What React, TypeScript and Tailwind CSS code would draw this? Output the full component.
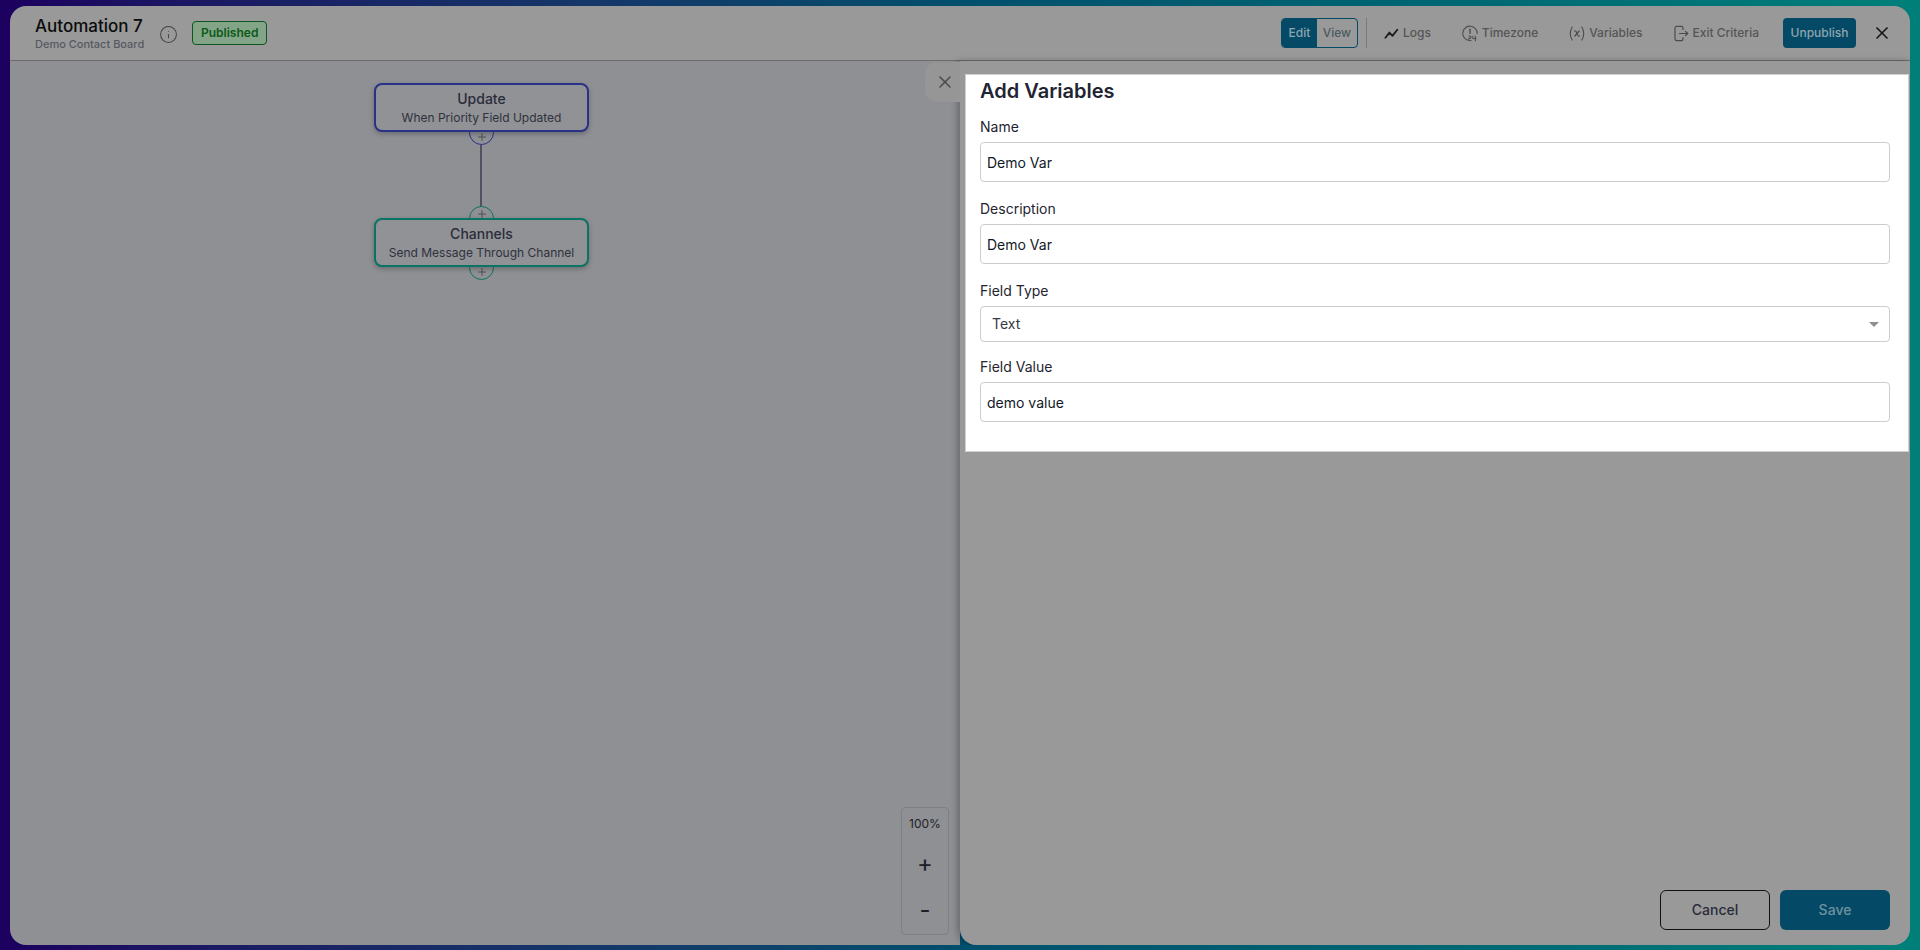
import { Info, Plus, X } from 'lucide-react';

function LogsIcon() {
  return (
    <svg width="15" height="15" viewBox="0 0 16 16" fill="none" stroke="#1f1f1f" strokeWidth="2" strokeLinejoin="round" strokeLinecap="round">
      <path d="M1.5 12.5 L5.8 7 L9 10.5 L14.2 4" />
    </svg>
  );
}

function TimezoneIcon() {
  return (
    <svg width="16" height="17" viewBox="0 0 16 17" fill="none" stroke="#4c4c4c" strokeWidth="1.1" strokeLinecap="round">
      <path d="M5.8 15.2 A7.2 7.2 0 1 1 15.2 8.5" />
      <path d="M8 4.2 V8.2" strokeWidth="1.4" />
      <path d="M6.8 11.2 H9 V13.2 H6.8 V15.6 H9" strokeWidth="1" />
      <path d="M10.8 11.2 V13.6 H14 M13.4 11.2 V15.8" strokeWidth="1" />
    </svg>
  );
}

function VariableIcon() {
  return (
    <svg width="16" height="17" viewBox="0 0 16 17" fill="none" stroke="#4c4c4c" strokeWidth="1.1" strokeLinecap="round">
      <path d="M3.2 2 C0.8 6 0.8 11 3.2 15" />
      <path d="M12.8 2 C15.2 6 15.2 11 12.8 15" />
      <path d="M5.4 6 C7.2 5.6 7.4 6.4 7.9 8.5 C8.4 10.6 8.7 11.4 10.6 11" strokeWidth="1.2" />
      <path d="M10.2 6 L5.8 11" strokeWidth="1.2" />
    </svg>
  );
}

function ExitIcon() {
  return (
    <svg width="15" height="17" viewBox="0 0 15 17" fill="none" stroke="#4c4c4c" strokeWidth="1.2" strokeLinecap="round" strokeLinejoin="round">
      <path d="M9 4.5 V3 A1.6 1.6 0 0 0 7.4 1.4 H2.6 A1.6 1.6 0 0 0 1 3 V14 A1.6 1.6 0 0 0 2.6 15.6 H7.4 A1.6 1.6 0 0 0 9 14 V12.5" />
      <path d="M5.5 8.5 H13.5 M11.5 6.5 L13.8 8.5 L11.5 10.5" />
    </svg>
  );
}

function NavItem({ icon, label }: { icon: React.ReactNode; label: string }) {
  return (
    <div className="flex items-center gap-[4px] text-xs font-medium text-[#555555]">
      {icon}
      <span>{label}</span>
    </div>
  );
}

function Header() {
  return (
    <header className="flex h-[55px] shrink-0 items-center justify-between border-b border-[#6c6c6c] bg-[#999999] pl-[25px] pr-[18px]">
      <div className="flex items-center">
        <div>
          <p className="text-[17px] leading-[22px] font-medium text-[#0b0b0b]">Automation 7</p>
          <p className="text-[11px] leading-[14px] font-medium text-[#555a62]">Demo Contact Board</p>
        </div>
        <Info className="ml-[15px] mt-[2px] text-[#444444]" size={19} strokeWidth={1.3} />
        <span className="ml-[14px] flex h-[24px] w-[75px] items-center justify-center rounded-[4px] border border-[#0d5621] bg-[#84a488] text-xs font-semibold text-[#0b5a18]">
          Published
        </span>
      </div>
      <div className="flex items-center">
        <div className="flex h-[30px] w-[77px] overflow-hidden rounded-[4px] border border-[#044a66] text-xs font-medium">
          <span className="flex w-[35px] items-center justify-center bg-[#044a66] text-[#8fa5b0]">Edit</span>
          <span className="flex flex-1 items-center justify-center text-[#4c5a60]">View</span>
        </div>
        <div className="ml-[8px] h-[30px] w-px bg-[#7a7a7a]" />
        <div className="ml-[17px] flex items-center gap-[31px]">
          <NavItem icon={<LogsIcon />} label="Logs" />
          <NavItem icon={<TimezoneIcon />} label="Timezone" />
          <NavItem icon={<VariableIcon />} label="Variables" />
          <NavItem icon={<ExitIcon />} label="Exit Criteria" />
        </div>
        <button className="ml-[24px] h-[30px] w-[73px] rounded-[4px] bg-[#044a66] text-xs font-medium text-[#8fa5b0]" type="button">
          Unpublish
        </button>
        <X className="ml-[16px] text-[#151515]" size={20} strokeWidth={2} />
      </div>
    </header>
  );
}

function Handle({ color, top, plus }: { color: string; top: string; plus: string }) {
  return (
    <div className={`absolute left-[459px] flex size-[25px] items-center justify-center rounded-full border bg-[#8f9094] ${color} ${top}`}>
      <Plus className={`text-[#4a4b52] ${plus}`} size={12} strokeWidth={1.8} />
    </div>
  );
}

function FlowNode({ title, subtitle, color, top }: { title: string; subtitle: string; color: string; top: string }) {
  return (
    <div className={`absolute left-[364px] flex h-[49px] w-[215px] flex-col items-center justify-center rounded-[8px] border-2 bg-[#919296] shadow-[0_2px_5px_rgba(0,0,0,0.25)] ${color} ${top}`}>
      <p className="text-sm leading-[19px] font-medium text-[#2a2c3a]">{title}</p>
      <p className="text-xs leading-[19px] text-[#2f313d]">{subtitle}</p>
    </div>
  );
}

function Canvas() {
  return (
    <div className="relative flex-1 bg-[#8f9094]">
      <div className="absolute left-[470px] top-[84px] h-[63px] w-[2px] bg-[#50525f]" />
      <Handle color="border-[#2a3288]" plus="translate-y-[4px]" top="top-[59px]" />
      <Handle color="border-[#0b7363]" plus="-translate-y-[5px]" top="top-[145px]" />
      <Handle color="border-[#0b7363]" plus="translate-y-[4px]" top="top-[194px]" />
      <FlowNode color="border-[#2a3288]" subtitle="When Priority Field Updated" title="Update" top="top-[22px]" />
      <FlowNode color="border-[#0b7363]" subtitle="Send Message Through Channel" title="Channels" top="top-[157px]" />
      <div className="absolute right-[11px] bottom-[10px] flex h-[128px] w-[48px] flex-col items-center rounded-[4px] border border-[#7f8084] text-[#1d1e26]">
        <span className="mt-[8px] text-xs leading-[16px]">100%</span>
        <span className="mt-[20px] text-[24px] leading-[24px]">+</span>
        <span className="mt-[22px] text-[24px] leading-[24px]">-</span>
      </div>
    </div>
  );
}

function Label({ children }: { children: string }) {
  return <label className="block text-sm leading-[17px] text-[#1f2430]">{children}</label>;
}

function TextField({ value }: { value: string }) {
  return (
    <input
      className="mt-[7px] block h-[40px] w-full rounded-[4px] border border-[#cccccf] px-[6px] text-sm text-[#111827] outline-none"
      readOnly
      value={value}
    />
  );
}

function VariablePanel() {
  return (
    <aside className="relative flex w-[950px] flex-col rounded-bl-[16px] bg-[#999999] pt-[13px] pl-[5px] pr-px shadow-[-3px_0_6px_rgba(0,0,0,0.25)]">
      <div className="absolute -left-[35px] top-px flex h-[40px] w-[35px] items-center justify-center rounded-l-[12px] bg-[#969696] pl-[5px]">
        <X className="text-[#4a4a4a]" size={20} strokeWidth={1.8} />
      </div>
      <section className="h-[378px] border border-[#cfcfcf] bg-white pl-[14px] pr-[18px]">
        <h2 className="mt-[3px] text-[20px] leading-[26px] font-semibold text-[#1f2433]">Add Variables</h2>
        <div className="mt-[14px]">
          <Label>Name</Label>
          <TextField value="Demo Var" />
        </div>
        <div className="mt-[18px]">
          <Label>Description</Label>
          <TextField value="Demo Var" />
        </div>
        <div className="mt-[18px]">
          <Label>Field Type</Label>
          <div className="mt-[7px] flex h-[36px] items-center justify-between rounded-[4px] border border-[#cccccf] pl-[11px] pr-[10px] text-sm text-[#333a45]">
            <span>Text</span>
            <span className="mt-[1px] h-0 w-0 border-x-[5px] border-t-[5px] border-x-transparent border-t-[#8f8f8f]" />
          </div>
        </div>
        <div className="mt-[16px]">
          <Label>Field Value</Label>
          <TextField value="demo value" />
        </div>
      </section>
      <div className="mt-auto flex justify-end gap-[10px] pb-[15px] pr-[19px]">
        <button className="h-[40px] w-[110px] rounded-[6px] border border-[#111111] text-sm font-medium text-[#2a2c3a]" type="button">
          Cancel
        </button>
        <button className="h-[40px] w-[110px] rounded-[6px] bg-[#044a66] text-sm font-medium text-[#6f929f]" type="button">
          Save
        </button>
      </div>
    </aside>
  );
}

export default function App() {
  return (
    <div className="h-screen bg-gradient-to-r from-[#1c005f] via-[#004f6c] to-[#007f79] pt-[6px] pr-[10px] pb-[5px] pl-[10px] font-['Inter',sans-serif]">
      <div className="flex h-full flex-col overflow-hidden rounded-[16px]">
        <Header />
        <div className="flex min-h-0 flex-1">
          <Canvas />
          <VariablePanel />
        </div>
      </div>
    </div>
  );
}
